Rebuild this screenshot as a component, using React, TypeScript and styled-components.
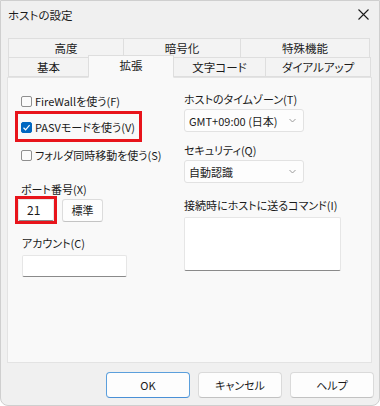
import styled, { createGlobalStyle } from "styled-components";

const GlobalStyle = createGlobalStyle`
  html, body {
    margin: 0;
    padding: 0;
    background: #ffffff;
  }
  body {
    font-family: "Noto Sans CJK JP", "Noto Sans", sans-serif;
    font-size: 11px;
    color: #1b1b1b;
    font-feature-settings: "palt";
    white-space: nowrap;
  }
  * {
    box-sizing: border-box;
  }
`;

const Window = styled.div`
  width: 380px;
  height: 406px;
  background: #f0f0f0;
  border: 1px solid #cfcfcf;
  border-radius: 0 0 8px 8px;
  display: flex;
  flex-direction: column;
`;

const TitleBar = styled.div`
  height: 27px;
  display: flex;
  align-items: center;
  justify-content: space-between;
  padding: 0 10px 0 7px;
`;

const Title = styled.div`
  line-height: 16px;
  font-size: 11.5px;
`;

const TabStrip = styled.div`
  margin: 10px 9px 0 7px;
  display: flex;
  flex-direction: column;
`;

const TabRow = styled.div<{ $front?: boolean }>`
  display: flex;
  align-items: flex-end;
  height: 20px;
  margin-top: ${({ $front }) => ($front ? "-1px" : "0")};
  position: relative;
  z-index: ${({ $front }) => ($front ? 2 : 1)};
`;

const Tab = styled.div<{ $w: number; $active?: boolean }>`
  flex: 0 0 ${({ $w }) => $w}px;
  margin-left: -1px;
  display: flex;
  align-items: center;
  justify-content: center;
  line-height: 16px;
  font-size: 11.5px;
  border: 1px solid #dedede;
  background: ${({ $active }) => ($active ? "#f9f9f9" : "#f3f3f3")};
  height: ${({ $active }) => ($active ? "23px" : "20px")};
  margin-bottom: ${({ $active }) => ($active ? "-1px" : "0")};
  padding-bottom: ${({ $active }) => ($active ? "3px" : "0")};
  border-bottom-color: ${({ $active }) => ($active ? "#f9f9f9" : "#dedede")};
  position: relative;
  z-index: ${({ $active }) => ($active ? 3 : 1)};

  &:first-child {
    margin-left: 0;
  }
`;

const Panel = styled.div`
  margin: 0 7px 0 6px;
  height: 286px;
  background: #f9f9f9;
  border: 1px solid #e3e3e3;
  display: grid;
  grid-template-columns: 176px 1fr;
`;

const LeftCol = styled.div`
  display: flex;
  flex-direction: column;
  align-items: flex-start;
  padding-left: 7px;
`;

const RightCol = styled.div`
  display: flex;
  flex-direction: column;
  align-items: flex-start;
`;

const CheckRow = styled.label<{ $mt?: number }>`
  display: flex;
  align-items: center;
  gap: 3px;
  line-height: 16px;
  height: 16px;
  margin-top: ${({ $mt }) => $mt ?? 0}px;
  margin-left: 6px;
`;

const Box = styled.span<{ $checked?: boolean }>`
  width: 11px;
  height: 11px;
  flex: 0 0 11px;
  border-radius: 2px;
  border: 1px solid ${({ $checked }) => ($checked ? "#0067c0" : "#8f8f8f")};
  background: ${({ $checked }) => ($checked ? "#0067c0" : "#fbfbfb")};
  display: flex;
  align-items: center;
  justify-content: center;
`;

const Highlight = styled.div<{ $mt?: number }>`
  border: 3px solid #e8141b;
  margin-top: ${({ $mt }) => $mt ?? 0}px;
`;

const PasvBox = styled(Highlight)`
  width: 127px;
  height: 31px;
  padding-top: 5px;

  ${CheckRow} {
    margin-left: 3px;
  }
`;

const Label = styled.div<{ $mt: number; $ml?: number }>`
  line-height: 14px;
  margin-top: ${({ $mt }) => $mt}px;
  margin-left: ${({ $ml }) => $ml ?? 0}px;
`;

const PortRow = styled.div`
  display: flex;
  align-items: center;
  gap: 5px;
`;

const PortBox = styled(Highlight)`
  width: 42px;
  height: 28px;
`;

const TextBox = styled.div<{ $w: number; $h: number; $mt?: number; $ml?: number }>`
  width: ${({ $w }) => $w}px;
  height: ${({ $h }) => $h}px;
  margin-top: ${({ $mt }) => $mt ?? 0}px;
  margin-left: ${({ $ml }) => $ml ?? 0}px;
  background: #ffffff;
  border: 1px solid #e6e6e6;
  border-bottom-color: #8a8a8a;
  border-radius: 2px;
  display: flex;
  align-items: center;
  padding-left: 8px;
  line-height: 16px;
  font-size: 12px;
`;

const SmallButton = styled.div`
  width: 41px;
  height: 23px;
  background: #fdfdfd;
  border: 1px solid #dcdcdc;
  border-bottom-color: #c4c4c4;
  border-radius: 3px;
  display: flex;
  align-items: center;
  justify-content: center;
  line-height: 16px;
`;

const Select = styled.div<{ $mt: number }>`
  width: 120px;
  height: 23px;
  margin-top: ${({ $mt }) => $mt}px;
  background: #fdfdfd;
  border: 1px solid #e2e2e2;
  border-radius: 3px;
  display: flex;
  align-items: center;
  justify-content: space-between;
  padding: 0 7px 0 4px;
  line-height: 16px;
`;

const Footer = styled.div`
  display: flex;
  justify-content: flex-end;
  gap: 8px;
  padding: 9px 5px 0 0;
`;

const Button = styled.div<{ $primary?: boolean }>`
  width: 84px;
  height: 26px;
  background: #fdfdfd;
  border: 1px solid ${({ $primary }) => ($primary ? "#5b9fdc" : "#dadada")};
  border-bottom-color: ${({ $primary }) => ($primary ? "#4a90d6" : "#c2c2c2")};
  border-radius: 4px;
  display: flex;
  align-items: center;
  justify-content: center;
  line-height: 16px;
`;

const Chevron = () => (
  <svg width="7" height="5" viewBox="0 0 7 5">
    <path d="M0.5 1 L3.5 4 L6.5 1" fill="none" stroke="#9a9a9a" strokeWidth="1" />
  </svg>
);

const Check = () => (
  <svg width="9" height="9" viewBox="0 0 9 9">
    <path d="M1.5 4.8 L3.6 6.8 L7.6 2.2" fill="none" stroke="#ffffff" strokeWidth="1.2" />
  </svg>
);

const CloseIcon = () => (
  <svg width="11" height="11" viewBox="0 0 11 11">
    <path d="M0.5 0.5 L10.5 10.5 M10.5 0.5 L0.5 10.5" stroke="#1b1b1b" strokeWidth="1.1" />
  </svg>
);

export default function App() {
  return (
    <>
      <GlobalStyle />
      <Window>
        <TitleBar>
          <Title>ホストの設定</Title>
          <CloseIcon />
        </TitleBar>

        <TabStrip>
          <TabRow>
            <Tab $w={116}>高度</Tab>
            <Tab $w={118}>暗号化</Tab>
            <Tab $w={130}>特殊機能</Tab>
          </TabRow>
          <TabRow $front>
            <Tab $w={81}>基本</Tab>
            <Tab $w={86} $active>
              拡張
            </Tab>
            <Tab $w={93}>文字コード</Tab>
            <Tab $w={106}>ダイアルアップ</Tab>
          </TabRow>
        </TabStrip>

        <Panel>
          <LeftCol>
            <CheckRow $mt={15}>
              <Box />
              FireWallを使う(F)
            </CheckRow>
            <PasvBox $mt={2}>
              <CheckRow>
                <Box $checked>
                  <Check />
                </Box>
                PASVモードを使う(V)
              </CheckRow>
            </PasvBox>
            <CheckRow $mt={5}>
              <Box />
              フォルダ同時移動を使う(S)
            </CheckRow>
            <Label $mt={19} $ml={6}>
              ポート番号(X)
            </Label>
            <PortRow>
              <PortBox>
                <TextBox $w={36} $h={22}>
                  21
                </TextBox>
              </PortBox>
              <SmallButton>標準</SmallButton>
            </PortRow>
            <Label $mt={12} $ml={7}>
              アカウント(C)
            </Label>
            <TextBox $w={105} $h={22} $mt={5} $ml={7} />
          </LeftCol>

          <RightCol>
            <Label $mt={14}>ホストのタイムゾーン(T)</Label>
            <Select $mt={3}>
              <span>GMT+09:00 (日本)</span>
              <Chevron />
            </Select>
            <Label $mt={11}>セキュリティ(Q)</Label>
            <Select $mt={3}>
              <span>自動認識</span>
              <Chevron />
            </Select>
            <Label $mt={15}>接続時にホストに送るコマンド(I)</Label>
            <TextBox $w={157} $h={54} $mt={5} />
          </RightCol>
        </Panel>

        <Footer>
          <Button $primary>OK</Button>
          <Button>キャンセル</Button>
          <Button>ヘルプ</Button>
        </Footer>
      </Window>
    </>
  );
}
